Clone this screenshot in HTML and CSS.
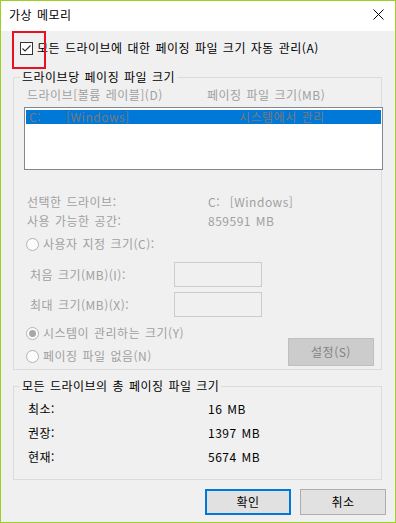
FILE: index.html
```html
<!DOCTYPE html>
<html lang="ko">
<head>
    <meta charset="UTF-8">
    <meta name="viewport" content="width=device-width, initial-scale=1.0">
    <title>가상 메모리</title>
    <link rel="stylesheet" href="styles.css">
</head>
<body>
    <div class="window">
        <div class="title-bar">
            <span class="title">가상 메모리</span>
            <svg class="close-icon" width="11" height="11" viewBox="0 0 11 11">
                <path d="M0.5 0.5 L10.5 10.5 M10.5 0.5 L0.5 10.5" stroke="#000" stroke-width="1" fill="none"/>
            </svg>
        </div>

        <div class="dialog">
            <div class="auto-manage">
                <span class="checkbox">
                    <svg width="11" height="11" viewBox="0 0 11 11">
                        <path d="M1.5 5.5 L4 8 L9.5 2.5" stroke="#333" stroke-width="1.2" fill="none"/>
                    </svg>
                </span>
                <span class="auto-label">모든 드라이브에 대한 페이징 파일 크기 자동 관리(A)</span>
                <span class="highlight"></span>
            </div>

            <fieldset class="group drive-group">
                <legend>드라이브당 페이징 파일 크기</legend>

                <div class="columns disabled">
                    <span>드라이브[볼륨 레이블](D)</span>
                    <span>페이징 파일 크기(MB)</span>
                </div>

                <div class="drive-list">
                    <div class="drive-row selected">
                        <span class="drive-letter">C:</span>
                        <span class="drive-name">[Windows]</span>
                        <span class="drive-size">시스템에서 관리</span>
                    </div>
                </div>

                <div class="info disabled">
                    <span>선택한 드라이브:</span>
                    <span>C:&nbsp;&nbsp;[Windows]</span>
                    <span>사용 가능한 공간:</span>
                    <span>859591 MB</span>
                </div>

                <div class="radio-row disabled custom-size">
                    <span class="radio"></span>
                    <span>사용자 지정 크기(C):</span>
                </div>

                <div class="size-row first-size disabled">
                    <span class="size-label">처음 크기(MB)(I):</span>
                    <span class="textbox"></span>
                </div>
                <div class="size-row disabled">
                    <span class="size-label">최대 크기(MB)(X):</span>
                    <span class="textbox"></span>
                </div>

                <div class="options">
                    <div class="radio-list">
                        <div class="radio-row disabled">
                            <span class="radio checked"></span>
                            <span>시스템이 관리하는 크기(Y)</span>
                        </div>
                        <div class="radio-row disabled">
                            <span class="radio"></span>
                            <span>페이징 파일 없음(N)</span>
                        </div>
                    </div>
                    <button class="btn set-btn" disabled>설정(S)</button>
                </div>
            </fieldset>

            <fieldset class="group total-group">
                <legend>모든 드라이브의 총 페이징 파일 크기</legend>
                <div class="totals">
                    <span>최소:</span>
                    <span>16 MB</span>
                    <span>권장:</span>
                    <span>1397 MB</span>
                    <span>현재:</span>
                    <span>5674 MB</span>
                </div>
            </fieldset>

            <div class="buttons">
                <button class="btn default">확인</button>
                <button class="btn">취소</button>
            </div>
        </div>
    </div>
</body>
</html>
```

FILE: styles.css
```css
:root {
    --frame: #9dcf25;
    --face: #f0f0f0;
    --line: #dcdcdc;
    --text: #000;
    --dim: #a0a0a0;
    --accent: #0078d7;
}

* {
    margin: 0;
    padding: 0;
    box-sizing: border-box;
}

body {
    font-family: "Noto Sans CJK KR", "Noto Sans", sans-serif;
    font-size: 12px;
    line-height: 16px;
    letter-spacing: 0.5px;
    word-spacing: 1px;
    color: var(--text);
    background: #fff;
}

.window {
    width: 396px;
    height: 523px;
    border: 1px solid var(--frame);
    display: flex;
    flex-direction: column;
    background: var(--face);
}

.title-bar {
    flex-shrink: 0;
    height: 30px;
    background: #fff;
    display: flex;
    align-items: center;
    justify-content: space-between;
    padding: 0 11px 0 8px;
}

.title {
    padding-bottom: 2px;
}

.close-icon {
    display: block;
    margin-bottom: 3px;
}

.dialog {
    flex: 1;
    padding: 0 9px 0 12px;
}

/* auto manage checkbox */

.auto-manage {
    position: relative;
    display: flex;
    align-items: center;
    height: 16px;
    margin-top: 9px;
    padding-left: 7px;
}

.checkbox {
    width: 13px;
    height: 13px;
    border: 1px solid #333;
    background: #fff;
    display: flex;
    align-items: center;
    justify-content: center;
    margin-right: 4px;
}

.checkbox svg {
    display: block;
}

.highlight {
    position: absolute;
    left: -1px;
    top: -9px;
    width: 34px;
    height: 38px;
    border: 2px solid #e81123;
}

/* groups */

.group {
    border: 1px solid var(--line);
    margin-right: 4px;
    min-width: 0;
}

.group legend {
    margin-left: 6px;
    padding: 0 2px;
    line-height: 16px;
}

.drive-group {
    margin-top: 13px;
    padding-bottom: 5px;
}

.disabled {
    color: var(--dim);
}

.columns {
    display: grid;
    grid-template-columns: 180px 1fr;
    padding-left: 13px;
    margin-top: 2px;
}

.drive-list {
    margin: 4px -2px 0 10px;
    height: 63px;
    border: 1px solid #828790;
    background: #fff;
    padding: 2px 1px;
}

.drive-row {
    display: flex;
    height: 14px;
    line-height: 14px;
    color: #7a7a7a;
    padding-left: 3px;
}

.drive-row.selected {
    background: var(--accent);
}

.drive-letter {
    width: 37px;
}

.drive-name {
    width: 173px;
}

.info {
    display: grid;
    grid-template-columns: 181px 1fr;
    row-gap: 3px;
    padding-left: 13px;
    margin-top: 24px;
}

.radio-row {
    display: flex;
    align-items: center;
    height: 16px;
    padding-left: 12px;
}

.custom-size {
    margin-top: 7px;
}

.radio {
    width: 13px;
    height: 13px;
    border: 1px solid #b4b4b4;
    border-radius: 50%;
    background: #fcfcfc;
    margin-right: 4px;
    display: flex;
    align-items: center;
    justify-content: center;
}

.radio.checked::after {
    content: "";
    width: 7px;
    height: 7px;
    border-radius: 50%;
    background: #a8a8a8;
}

.size-row {
    display: flex;
    align-items: center;
    padding-left: 16px;
    margin-top: 5px;
}

.first-size {
    margin-top: 10px;
}

.size-label {
    width: 144px;
}

.textbox {
    width: 88px;
    height: 25px;
    border: 1px solid #cccccc;
    background: var(--face);
}

.options {
    display: flex;
    justify-content: space-between;
    align-items: flex-end;
    margin-top: 8px;
    padding-right: 7px;
}

.radio-list {
    display: flex;
    flex-direction: column;
    gap: 7px;
}

.btn {
    font-family: inherit;
    font-size: 12px;
    line-height: 16px;
    letter-spacing: 0.5px;
    width: 86px;
    height: 26px;
    border: 1px solid #adadad;
    background: #e1e1e1;
    color: var(--text);
}

.btn.default {
    border: 2px solid var(--accent);
}

.set-btn {
    height: 28px;
    margin-bottom: -2px;
    background: #cccccc;
    border-color: #bfbfbf;
    color: #838383;
}

/* totals */

.total-group {
    margin-top: 8px;
    padding-bottom: 14px;
}

.totals {
    display: grid;
    grid-template-columns: 180px 1fr;
    row-gap: 8px;
    padding-left: 14px;
    margin-top: 7px;
}

.buttons {
    display: flex;
    justify-content: flex-end;
    gap: 9px;
    margin-top: 9px;
}
```
